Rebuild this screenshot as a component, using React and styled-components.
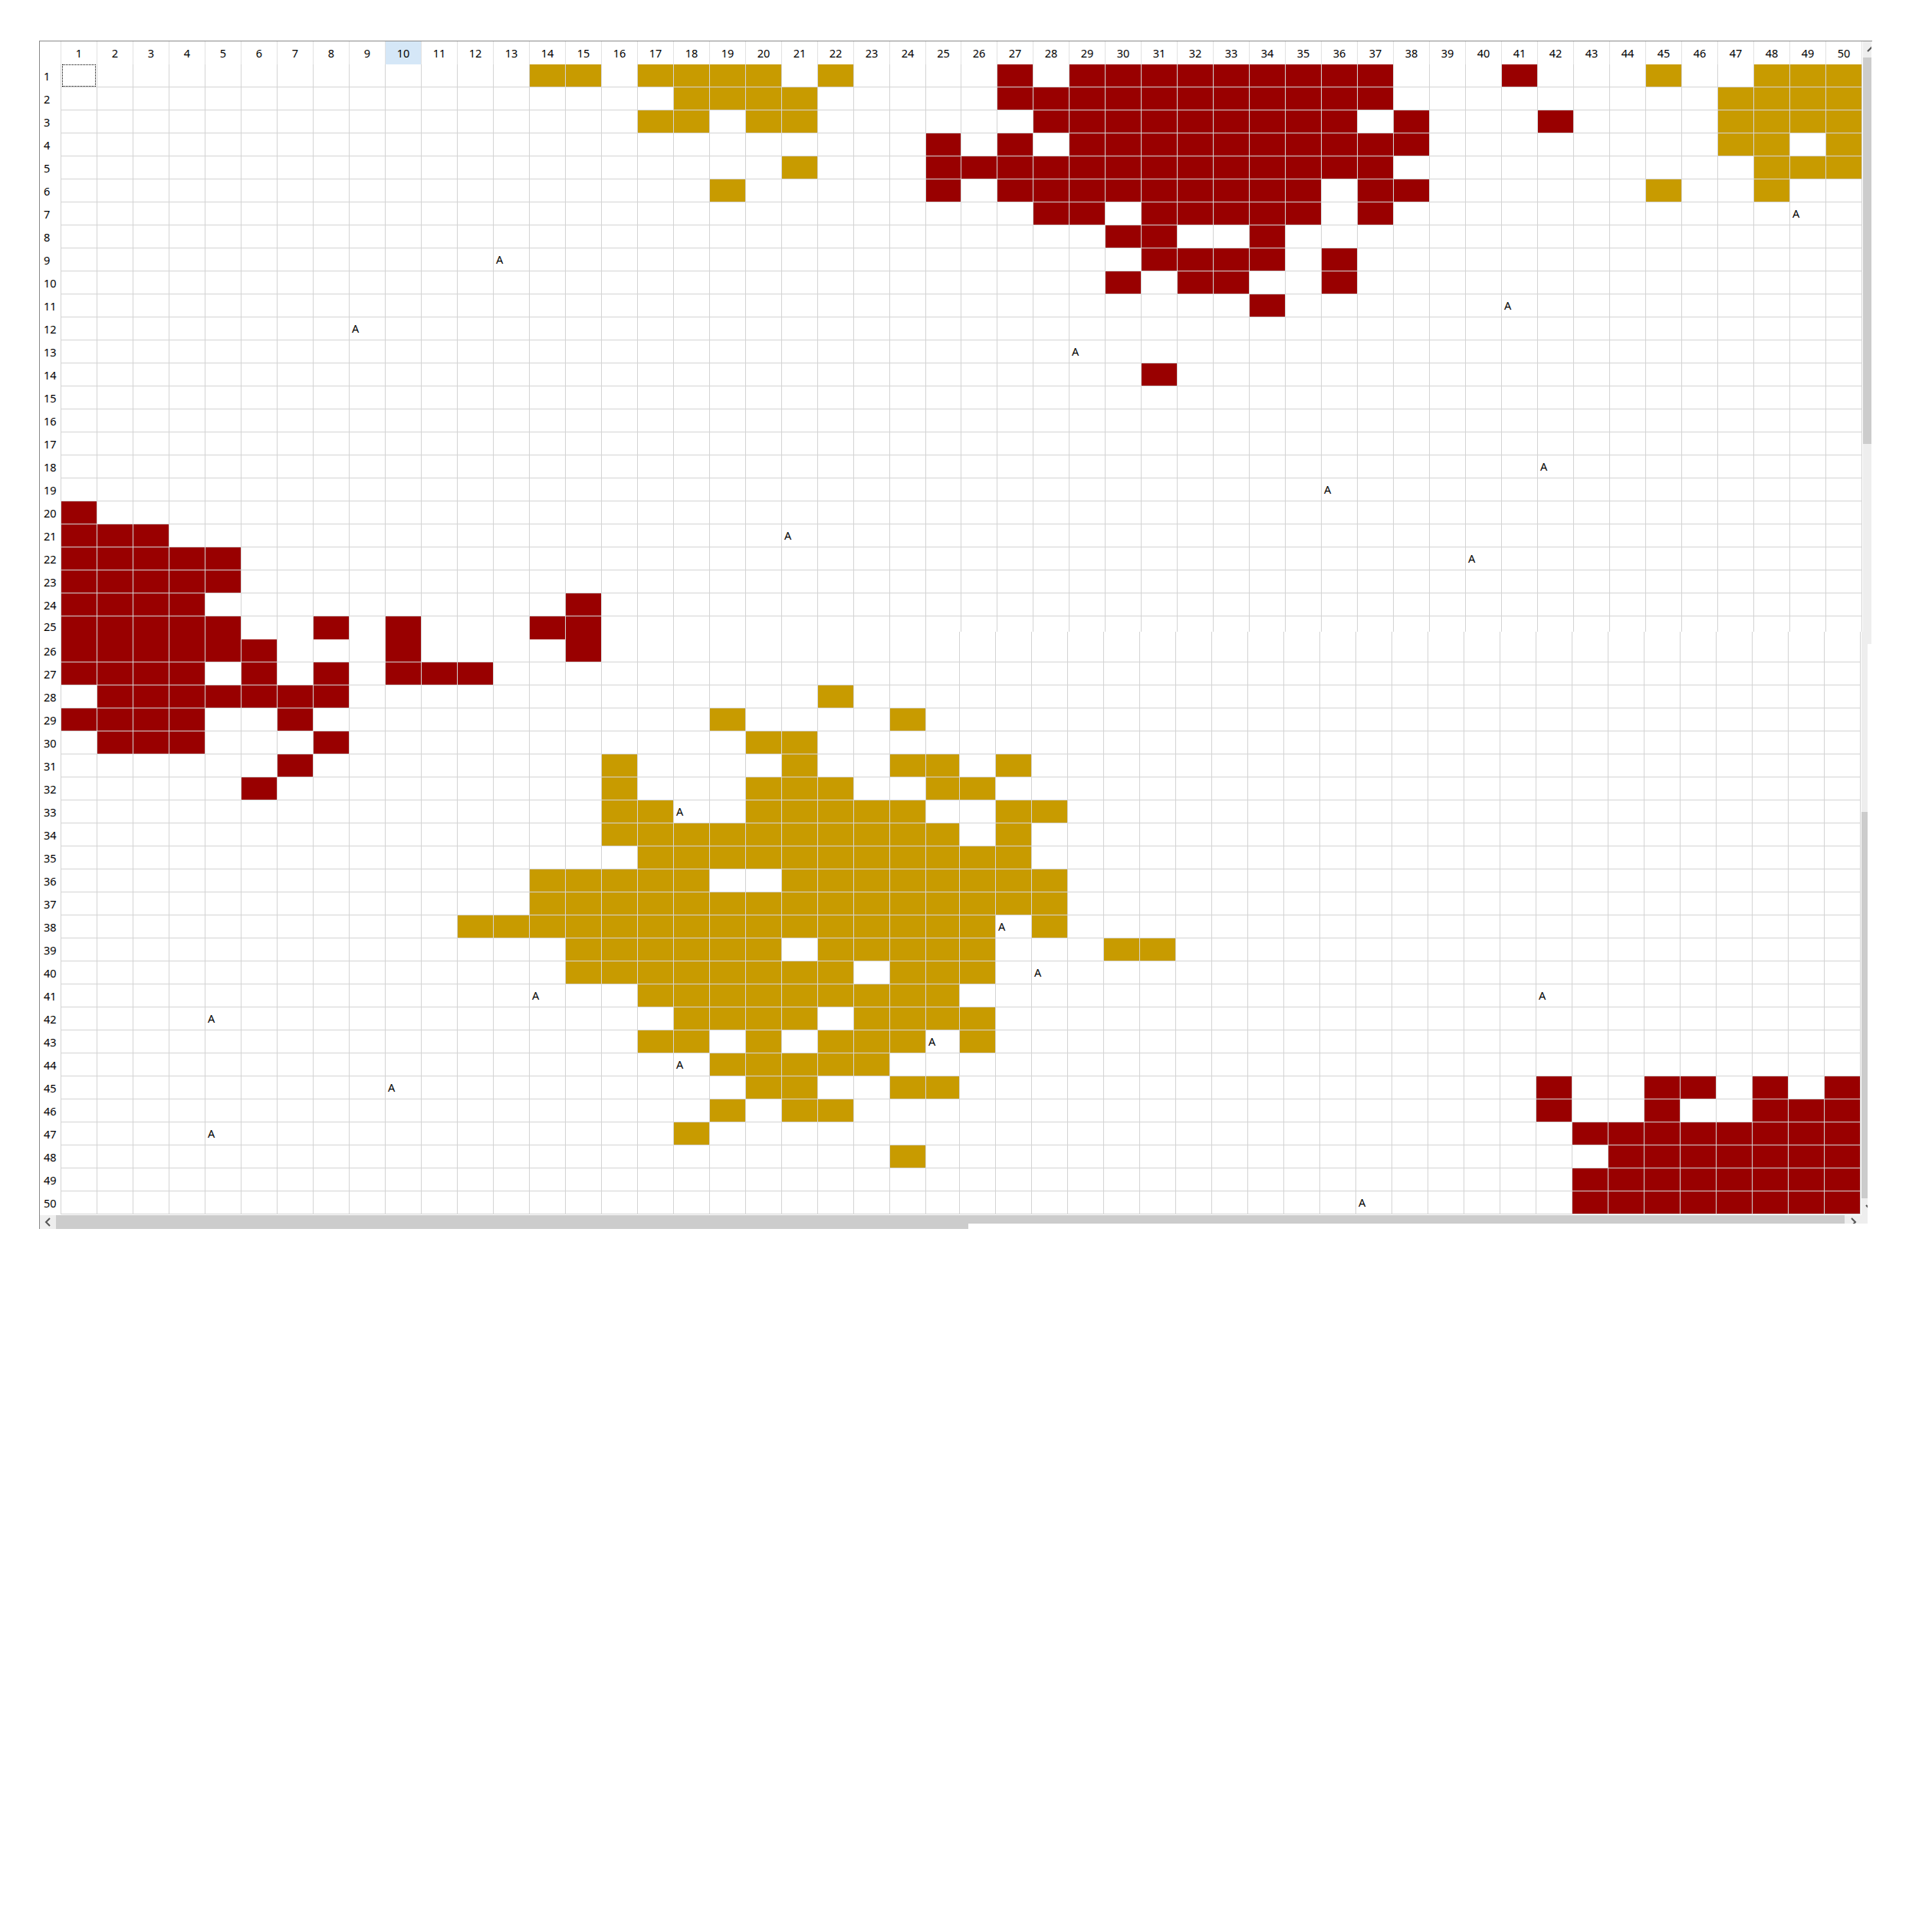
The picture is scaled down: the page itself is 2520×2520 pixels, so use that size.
import React from "react";
import { createGlobalStyle, styled } from "styled-components";

const ROWS = 50;
const COLS = 50;

// filled cells per row, "a-b" is a run of columns
const RED = {
    1: "27 29-37 41",
    2: "27-37",
    3: "28-36 38 42",
    4: "25 27 29-38",
    5: "25-37",
    6: "25 27-35 37 38",
    7: "28 29 31-35 37",
    8: "30 31 34",
    9: "31-34 36",
    10: "30 32 33 36",
    11: "34",
    14: "31",
    20: "1",
    21: "1-3",
    22: "1-5",
    23: "1-5",
    24: "1-4 15",
    25: "1-5 8 10 14 15",
    26: "1-6 10 15",
    27: "1-4 6 8 10-12",
    28: "2-8",
    29: "1-4 7",
    30: "2-4 8",
    31: "7",
    32: "6",
    45: "42 45 46 48 50",
    46: "42 45 48-50",
    47: "43-50",
    48: "44-50",
    49: "43-50",
    50: "43-50",
};

const GOLD = {
    1: "14 15 17-20 22 45 48-50",
    2: "18-21 47-50",
    3: "17 18 20 21 47-50",
    4: "47 48 50",
    5: "21 48-50",
    6: "19 45 48",
    28: "22",
    29: "19 24",
    30: "20 21",
    31: "16 21 24 25 27",
    32: "16 20-22 25 26",
    33: "16 17 20-24 27 28",
    34: "16-25 27",
    35: "17-27",
    36: "14-18 21-28",
    37: "14-28",
    38: "12-26 28",
    39: "15-20 22-26 30 31",
    40: "15-22 24-26",
    41: "17-25",
    42: "18-21 23-26",
    43: "17 18 20 22-24 26",
    44: "19-23",
    45: "20 21 24 25",
    46: "19 21 22",
    47: "18",
    48: "24",
};

const LETTERS = {
    7: [49],
    9: [13],
    11: [41],
    12: [9],
    13: [29],
    18: [42],
    19: [36],
    21: [21],
    22: [40],
    33: [18],
    38: [27],
    40: [28],
    41: [14, 42],
    42: [5],
    43: [25],
    44: [18],
    45: [10],
    47: [5],
    50: [37],
};

const parseRuns = (spec) => {
    const found = new Set();
    if (!spec) return found;
    spec.split(" ").forEach((part) => {
        const [from, to] = part.split("-").map(Number);
        for (let c = from; c <= (to || from); c++) found.add(c);
    });
    return found;
};

const range = (from, to) => {
    const list = [];
    for (let i = from; i <= to; i++) list.push(i);
    return list;
};

const GlobalStyle = createGlobalStyle`
  body {
    margin: 0;
    background: #fff;
    font-family: "Noto Sans", "Open Sans", sans-serif;
  }
`;

const Page = styled.div`
  padding: 53px 0 0 51px;
  height: 2467px;
`;

const Frame = styled.div`
  width: 2390px;
  border-top: 1px solid #8a8a8a;
  border-left: 1px solid #8a8a8a;
`;

const Slice = styled.div`
  display: flex;
  align-items: flex-start;
  height: ${(p) => p.$height}px;
`;

// column 25 is narrower than the rest, and differs between the two parts
const Pane = styled.div`
  --col25: ${(p) => p.$col25}px;
  flex: none;
  width: ${(p) => p.$width}px;
`;

const Row = styled.div`
  display: flex;
  height: ${(p) => p.$height || 30}px;
  overflow: hidden;
`;

const Corner = styled.div`
  flex: none;
  box-sizing: border-box;
  width: 28px;
  border-right: 1px solid #e2e2e2;
`;

const ColHead = styled.div`
  flex: none;
  box-sizing: border-box;
  width: 47px;
  border-right: 1px solid #e2e2e2;
  background: ${(p) => (p.$active ? "#d5e7f7" : "#fff")};
  color: #000;
  font-size: 14.5px;
  line-height: 31px;
  text-align: center;
  &:nth-child(26) {
    width: var(--col25);
  }
`;

const RowHead = styled.div`
  flex: none;
  box-sizing: border-box;
  width: 28px;
  padding: ${(p) => (p.$cut ? "6px 0 0 5px" : "0 0 0 5px")};
  border-right: 1px solid #d4d4d4;
  color: #000;
  font-size: 14.5px;
  line-height: ${(p) => (p.$cut ? "14px" : "31px")};
`;

const Cell = styled.div`
  flex: none;
  box-sizing: border-box;
  width: 47px;
  height: 30px;
  padding-left: 3px;
  border-right: 1px solid #d4d4d4;
  border-bottom: 1px solid #d4d4d4;
  background: ${(p) => p.$fill || "#fff"};
  color: #000;
  font-size: 14.5px;
  line-height: 28px;
  &:nth-child(26) {
    width: var(--col25);
  }
`;

const FocusBox = styled.div`
  box-sizing: border-box;
  width: 44px;
  height: 29px;
  margin-left: -2px;
  border: 1px dotted #000;
`;

const LeftColumn = styled.div`
  flex: none;
  width: 2376px;
`;

const HBar = styled.div`
  display: flex;
  align-items: flex-start;
  height: 18px;
  margin-top: 1px;
`;

const HButton = styled.div`
  flex: none;
  display: flex;
  align-items: flex-start;
  justify-content: center;
  overflow: hidden;
  width: ${(p) => p.$width}px;
  height: ${(p) => p.$height}px;
  background: #eee;
  svg {
    flex: none;
    margin-top: 3px;
  }
`;

const HThumb = styled.div`
  flex: ${(p) => (p.$width ? "none" : "1")};
  width: ${(p) => (p.$width ? `${p.$width}px` : "auto")};
  height: ${(p) => p.$height}px;
  background: #ccc;
`;

const VBar = styled.div`
  flex: none;
  overflow: hidden;
  width: ${(p) => p.$width}px;
  height: ${(p) => p.$height}px;
  margin-left: ${(p) => p.$gap || 0}px;
  background: #eee;
`;

const VButton = styled.div`
  display: flex;
  align-items: center;
  justify-content: center;
  width: 22px;
  height: 21px;
`;

const VTrack = styled.div`
  height: ${(p) => p.$height}px;
`;

const VThumb = styled.div`
  height: 504px;
  background: #ccc;
`;

const CHEVRONS = {
    up: "M1 8 L6 3 L11 8",
    down: "M1 4 L6 9 L11 4",
    left: "M8 1 L3 6 L8 11",
    right: "M4 1 L9 6 L4 11",
};

const Chevron = ({ dir }) => (
    <svg width="12" height="12" viewBox="0 0 12 12" fill="none">
        <path d={CHEVRONS[dir]} stroke="#555" strokeWidth="2" />
    </svg>
);

const renderCell = (row, col) => {
    let fill;
    if (parseRuns(RED[row]).has(col)) fill = "#990000";
    if (parseRuns(GOLD[row]).has(col)) fill = "#c89b00";
    const letter = (LETTERS[row] || []).includes(col);
    return (
        <Cell key={col} $fill={fill}>
            {letter && "A"}
            {row === 1 && col === 1 && <FocusBox />}
        </Cell>
    );
};

const SheetRow = ({ row, height, label = true }) => (
    <Row $height={height}>
        <RowHead $cut={height === 20}>{label && row}</RowHead>
        {range(1, COLS).map((col) => renderCell(row, col))}
    </Row>
);

// row 25 is split by the seam between the two captured parts
const App = () => (
    <Page>
        <GlobalStyle />
        <Frame>
            <Slice $height={770}>
                <Pane $col25={46} $width={2377}>
                    <Row>
                        <Corner />
                        {range(1, COLS).map((col) => (
                            <ColHead key={col} $active={col === 10}>
                                {col}
                            </ColHead>
                        ))}
                    </Row>
                    {range(1, 24).map((row) => (
                        <SheetRow key={row} row={row} />
                    ))}
                    <SheetRow row={25} height={20} />
                </Pane>
                <VBar $width={11} $height={786} $gap={1}>
                    <VButton>
                        <Chevron dir="up" />
                    </VButton>
                    <VThumb />
                    <VTrack $height={261} />
                </VBar>
            </Slice>
            <Slice $height={779}>
                <LeftColumn>
                    <Pane $col25={44} $width={2375}>
                        <SheetRow row={25} height={10} label={false} />
                        {range(26, ROWS).map((row) => (
                            <SheetRow key={row} row={row} />
                        ))}
                    </Pane>
                    <HBar>
                        <HButton $width={21} $height={18}>
                            <Chevron dir="left" />
                        </HButton>
                        <HThumb $width={1190} $height={18} />
                        <HThumb $height={11} />
                        <HButton $width={22} $height={11}>
                            <Chevron dir="right" />
                        </HButton>
                    </HBar>
                </LeftColumn>
                <VBar $width={8} $height={772}>
                    <VTrack $height={235} />
                    <VThumb />
                    <VButton>
                        <Chevron dir="down" />
                    </VButton>
                </VBar>
            </Slice>
        </Frame>
    </Page>
);

export default App;
